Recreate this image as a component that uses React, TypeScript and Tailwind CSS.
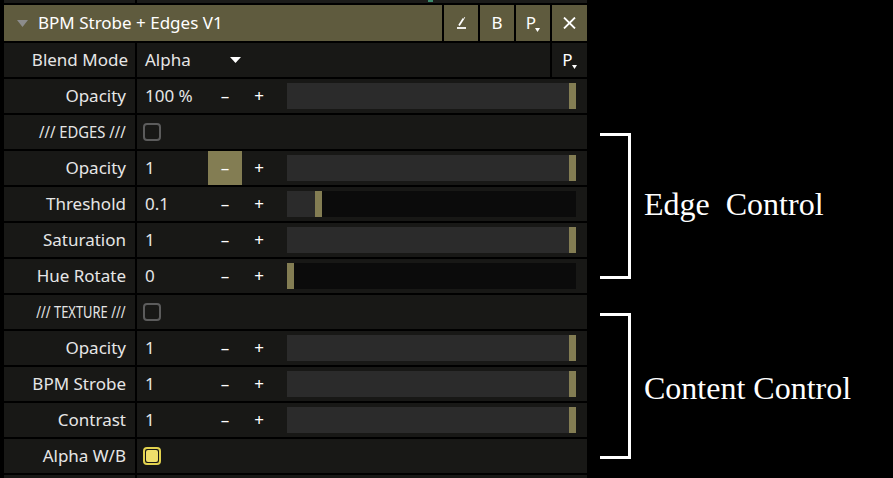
import type { ReactNode } from "react";

const CELL = "bg-[#181816]";

type Param = { label: string; value: string; frac: number; active?: boolean };

const EDGE_PARAMS: Param[] = [
  { label: "Opacity", value: "1", frac: 1, active: true },
  { label: "Threshold", value: "0.1", frac: 0.1 },
  { label: "Saturation", value: "1", frac: 1 },
  { label: "Hue Rotate", value: "0", frac: 0 },
];

const TEXTURE_PARAMS: Param[] = [
  { label: "Opacity", value: "1", frac: 1 },
  { label: "BPM Strobe", value: "1", frac: 1 },
  { label: "Contrast", value: "1", frac: 1 },
];

function Row({ label, squeeze, children }: { label: ReactNode; squeeze?: string; children: ReactNode }) {
  return (
    <div className="flex h-[34px] gap-[2px]">
      <div
        className={`w-[131px] ${CELL} flex items-center justify-end pr-[9px] text-[17px] text-[#e6e6e6]`}
      >
        {squeeze ? <span className={`inline-block origin-right ${squeeze}`}>{label}</span> : label}
      </div>
      <div className={`flex-1 ${CELL} flex items-center`}>{children}</div>
    </div>
  );
}

function Slider({ frac }: { frac: number }) {
  // knob is 7px wide, fill runs up to its left edge
  return (
    <div className="relative ml-[11px] mr-[11px] h-[26px] flex-1 bg-[#0b0b0b]">
      <div
        className="absolute inset-y-0 left-0 bg-[#2b2b2b]"
        style={{ width: `calc(${frac} * (100% - 7px))` }}
      />
      <div
        className="absolute inset-y-0 w-[7px] bg-[#837d53]"
        style={{ left: `calc(${frac} * (100% - 7px))` }}
      />
    </div>
  );
}

function ParamRow({ p }: { p: Param }) {
  return (
    <Row label={p.label}>
      <div className="w-[71px] pl-[8px] text-[17px] text-[#e6e6e6]">{p.value}</div>
      <div
        className={`flex h-full w-[34px] items-center justify-center text-[17px] text-white ${
          p.active ? "bg-[#837d53]" : ""
        }`}
      >
        –
      </div>
      <div className="flex h-full w-[34px] items-center justify-center text-[17px] text-white">+</div>
      <Slider frac={p.frac} />
    </Row>
  );
}

function Check({ on }: { on?: boolean }) {
  return on ? (
    <div className="ml-[6px] flex h-[18px] w-[18px] items-center justify-center rounded-[4px] border-2 border-[#e2d24e] p-[1px]">
      <div className="h-full w-full rounded-[2px] bg-[#efdf6a]" />
    </div>
  ) : (
    <div className="ml-[6px] h-[18px] w-[18px] rounded-[4px] border-2 border-[#5c5c5c]" />
  );
}

function PDrop() {
  return (
    <span className="relative inline-flex items-end">
      P
      <svg width="5" height="4" viewBox="0 0 5 4" className="mb-[4px] -ml-[1px]">
        <path d="M0 0h5L2.5 4z" fill="currentColor" />
      </svg>
    </span>
  );
}

function HeadBtn({ children, wide }: { children: ReactNode; wide?: boolean }) {
  return (
    <div
      className={`${wide ? "w-[35px]" : "w-[34px]"} flex items-center justify-center bg-[#5f5b3e] text-[17px] text-white`}
    >
      {children}
    </div>
  );
}

function Bracket({ label, pad }: { label: string; pad: string }) {
  return (
    <div className="flex h-[146px] items-center">
      <div className="h-full w-[31px] border-y-[3px] border-r-[3px] border-white" />
      <div
        className={`ml-[13px] whitespace-pre text-[32px] text-white ${pad}`}
        style={{ fontFamily: '"Liberation Serif", "Times New Roman", serif' }}
      >
        {label}
      </div>
    </div>
  );
}

export default function App() {
  return (
    <div
      className="flex h-[478px] w-[893px] overflow-hidden bg-black"
      style={{ fontFamily: '"Noto Sans", "Open Sans", sans-serif' }}
    >
      <div className="ml-[4px] flex w-[583px] flex-col gap-[2px]">
        {/* tail of the previous clip */}
        <div className="flex h-[3px] gap-[2px]">
          <div className="w-[131px] bg-[#1c1c1a]" />
          <div className="flex flex-1 bg-[#1c1c1a]">
            <div className="ml-[291px] h-[2px] w-[5px] bg-[#3c8a6c]" />
          </div>
        </div>

        <div className="flex h-[36px] gap-[2px]">
          <div className="flex flex-1 items-center bg-[#5f5b3e] pl-[13px] text-[17px] text-white">
            <svg width="11" height="7" viewBox="0 0 11 7" className="mt-[1px]">
              <path d="M0 0h11L5.5 7z" fill="#8c8c8c" />
            </svg>
            <span className="ml-[10px]">BPM Strobe + Edges V1</span>
          </div>
          <HeadBtn>
            <svg width="14" height="14" viewBox="0 0 14 14">
              <path d="M9.5 2.5 5 9.5" stroke="white" strokeWidth="1.8" fill="none" />
              <path d="M10 1.6 10.8 2.2" stroke="white" strokeWidth="1.4" />
              <path d="M3 12h9" stroke="white" strokeWidth="1.8" />
            </svg>
          </HeadBtn>
          <HeadBtn>B</HeadBtn>
          <HeadBtn>
            <PDrop />
          </HeadBtn>
          <HeadBtn wide>
            <svg width="13" height="12" viewBox="0 0 13 12">
              <path d="M1 0.5 12 11.5M12 0.5 1 11.5" stroke="white" strokeWidth="1.8" />
            </svg>
          </HeadBtn>
        </div>

        <div className="flex h-[34px] gap-[2px]">
          <div className="flex w-[131px] items-center justify-end bg-[#181816] pr-[7px] text-[17px] text-[#e6e6e6]">
            Blend Mode
          </div>
          <div className="flex flex-1 items-center bg-[#181816] pl-[8px] text-[17px] text-[#e6e6e6]">
            <span className="w-[85px]">Alpha</span>
            <svg width="11" height="6" viewBox="0 0 11 6">
              <path d="M0 0h11L5.5 6z" fill="white" />
            </svg>
          </div>
          <div className="flex w-[35px] items-center justify-center bg-[#181816] text-[17px] text-white">
            <PDrop />
          </div>
        </div>

        <ParamRow p={{ label: "Opacity", value: "100 %", frac: 1 }} />

        <Row label="/// EDGES ///" squeeze="scale-x-[0.87]">
          <Check />
        </Row>
        {EDGE_PARAMS.map((p) => (
          <ParamRow key={p.label} p={p} />
        ))}

        <Row label="/// TEXTURE ///" squeeze="scale-x-[0.76]">
          <Check />
        </Row>
        {TEXTURE_PARAMS.map((p) => (
          <ParamRow key={p.label} p={p} />
        ))}

        <Row label="Alpha W/B">
          <Check on />
        </Row>

        <div className="flex h-[3px] gap-[2px]">
          <div className="w-[131px] bg-[#181816]" />
          <div className="flex-1 bg-[#181816]" />
        </div>
      </div>

      <div className="ml-[13px] flex flex-col gap-[34px] pt-[133px]">
        <Bracket label="Edge  Control" pad="pb-[5px]" />
        <Bracket label="Content Control" pad="pt-[4px]" />
      </div>
    </div>
  );
}
